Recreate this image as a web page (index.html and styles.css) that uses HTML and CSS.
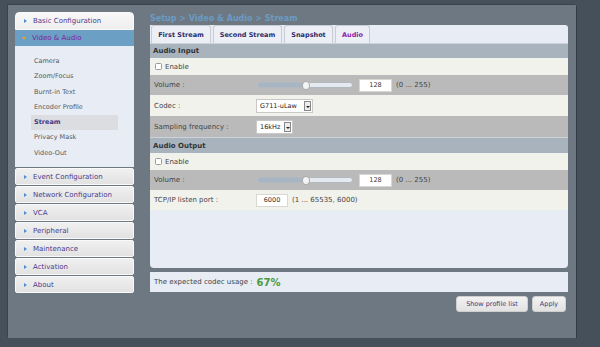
FILE: index.html
```html
<!DOCTYPE html>
<html>
<head>
<meta charset="utf-8">
<link rel="stylesheet" href="styles.css">
</head>
<body>
<div class="panel">
  <nav class="sidebar">
    <div class="menu-item first"><span class="arrow-r"></span>Basic Configuration</div>
    <div class="menu-open"><span class="arrow-d"></span>Video &amp; Audio</div>
    <ul class="submenu">
      <li>Camera</li>
      <li>Zoom/Focus</li>
      <li>Burnt-in Text</li>
      <li>Encoder Profile</li>
      <li class="current">Stream</li>
      <li>Privacy Mask</li>
      <li>Video-Out</li>
    </ul>
    <div class="menu-item"><span class="arrow-r"></span>Event Configuration</div>
    <div class="menu-item"><span class="arrow-r"></span>Network Configuration</div>
    <div class="menu-item"><span class="arrow-r"></span>VCA</div>
    <div class="menu-item"><span class="arrow-r"></span>Peripheral</div>
    <div class="menu-item"><span class="arrow-r"></span>Maintenance</div>
    <div class="menu-item"><span class="arrow-r"></span>Activation</div>
    <div class="menu-item last"><span class="arrow-r"></span>About</div>
  </nav>
  <main class="main">
    <div class="crumb">Setup &gt; Video &amp; Audio &gt; Stream</div>
    <div class="content">
      <div class="tabs">
        <div class="tab t1">First Stream</div>
        <div class="tab t2">Second Stream</div>
        <div class="tab t3">Snapshot</div>
        <div class="tab t4 active">Audio</div>
      </div>
      <div class="section">Audio Input</div>
      <div class="row light r17"><span class="check"></span>Enable</div>
      <div class="row dark r20">
        <span class="label">Volume :</span>
        <span class="slider"><span class="fill"></span><span class="knob"></span></span>
        <span class="num">128</span>
        <span class="hint">(0 ... 255)</span>
      </div>
      <div class="row light r21">
        <span class="label">Codec :</span>
        <span class="select w57">G711-uLaw<span class="sel-btn"></span></span>
      </div>
      <div class="row dark r21">
        <span class="label">Sampling frequency :</span>
        <span class="select w37">16kHz<span class="sel-btn"></span></span>
      </div>
      <div class="section s16">Audio Output</div>
      <div class="row light r17"><span class="check"></span>Enable</div>
      <div class="row dark r20">
        <span class="label">Volume :</span>
        <span class="slider"><span class="fill"></span><span class="knob"></span></span>
        <span class="num">128</span>
        <span class="hint">(0 ... 255)</span>
      </div>
      <div class="row light r20">
        <span class="label">TCP/IP listen port :</span>
        <span class="num port">6000</span>
        <span class="hint">(1 ... 65535, 6000)</span>
      </div>
    </div>
    <div class="usage">The expected codec usage : <span class="pct">67%</span></div>
    <div class="buttons">
      <button class="btn b1">Show profile list</button>
      <button class="btn b2">Apply</button>
    </div>
  </main>
</div>
</body>
</html>
```
FILE: styles.css
```css
html, body {
  margin: 0;
  padding: 0;
  background: #46505a;
  font-family: "DejaVu Sans", Verdana, sans-serif;
  font-size: 7px;
}
.panel {
  margin: 5px 0 0 8px;
  width: 568px;
  height: 333px;
  box-sizing: border-box;
  background: #6e7882;
  box-shadow: 1px 1px 0 #333b44, -1px -1px 0 #3a434c;
  padding: 7px 8px 0 7px;
  display: flex;
  gap: 16px;
}
.sidebar {
  width: 119px;
  flex: none;
}
.menu-item {
  height: 17px;
  box-sizing: border-box;
  margin-bottom: 1px;
  background: linear-gradient(#f0f0f0, #e2e2e2);
  border: 1px solid #fafafa;
  border-radius: 2px;
  color: #4b3a8c;
  font-size: 7px;
  display: flex;
  align-items: center;
  padding-left: 8px;
  white-space: nowrap;
}
.menu-item.first {
  height: 18px;
  margin-bottom: 0;
  border-radius: 4px 4px 0 0;
  background: linear-gradient(#f8f8f8, #eeeeee);
}
.arrow-r {
  width: 0;
  height: 0;
  border-left: 3px solid #4a8fd4;
  border-top: 2px solid transparent;
  border-bottom: 2px solid transparent;
  margin-right: 6px;
}
.menu-open {
  height: 16px;
  background: #6b9fc3;
  color: #7a1fa0;
  display: flex;
  align-items: center;
  padding-left: 7px;
}
.arrow-d {
  width: 0;
  height: 0;
  border-top: 3px solid #e8a42a;
  border-left: 2.5px solid transparent;
  border-right: 2.5px solid transparent;
  margin-right: 6px;
}
.submenu {
  list-style: none;
  margin: 0 0 1px 0;
  padding: 8px 16px 5px 16px;
  background: #e8ecf4;
  height: 121px;
  box-sizing: border-box;
}
.submenu li {
  height: 15.3px;
  line-height: 15.3px;
  font-size: 6.5px;
  color: #555a60;
  padding-left: 3px;
}
.submenu li.current {
  background: #dcdde0;
  font-weight: bold;
  color: #3b3b8c;
}
.main {
  width: 418px;
  flex: none;
}
.crumb {
  height: 13px;
  line-height: 13px;
  font-size: 8px;
  font-weight: bold;
  color: #6b9bc4;
  white-space: nowrap;
}
.content {
  background: #e8ecf4;
  height: 243px;
  border-radius: 0 3px 4px 4px;
}
.tabs {
  height: 18px;
  display: flex;
  gap: 2px;
  padding-left: 1px;
}
.tab {
  height: 18px;
  box-sizing: border-box;
  padding: 0;
  border: 1px solid #c9ccd2;
  border-bottom: none;
  border-radius: 3px 3px 0 0;
  background: #eceff5;
  font-weight: bold;
  font-size: 6.5px;
  color: #2c2c6a;
  display: flex;
  align-items: center;
  justify-content: center;
  white-space: nowrap;
  flex: none;
}
.t1 { width: 60px; }
.t2 { width: 69px; }
.t3 { width: 49px; }
.t4 { width: 35px; }
.tab.active { color: #8c22a8; }
.section {
  height: 15px;
  box-sizing: border-box;
  background: #a9b3bd;
  border-top: 1px solid #cdd3da;
  font-weight: bold;
  color: #333;
  padding-left: 3px;
  display: flex;
  align-items: center;
}
.section.s16 { height: 16px; }
.row {
  display: flex;
  align-items: center;
  color: #444;
  padding-left: 4px;
  white-space: nowrap;
}
.light { background: #f2f2ec; }
.dark { background: #bababa; }
.r17 { height: 17px; }
.r20 { height: 20px; }
.r21 { height: 21px; }
.check {
  width: 7px;
  height: 7px;
  box-sizing: border-box;
  border: 1px solid #999;
  border-radius: 1.5px;
  background: #fff;
  margin: 0 3px 0 1px;
}
.label {
  width: 102px;
  flex: none;
}
.slider {
  position: relative;
  width: 97px;
  height: 6px;
  border-radius: 3px;
  background: #e4eaf0;
  border: 0.5px solid #b0b8c0;
  box-sizing: border-box;
}
.fill {
  display: block;
  width: 49px;
  height: 100%;
  border-radius: 3px 0 0 3px;
  background: #a8b5c3;
}
.knob {
  position: absolute;
  left: 45px;
  top: -2px;
  width: 8px;
  height: 9px;
  border-radius: 50%;
  background: #f4f4f4;
  border: 0.5px solid #aaa;
  box-sizing: border-box;
}
.num {
  margin-left: 6px;
  width: 33px;
  height: 13px;
  box-sizing: border-box;
  background: #fff;
  border: 1px solid #d8d8d0;
  font-size: 6.5px;
  color: #333;
  display: flex;
  align-items: center;
  justify-content: center;
}
.num.port {
  margin-left: 0;
  width: 32px;
}
.hint {
  margin-left: 4px;
  color: #444;
}
.select {
  height: 14px;
  box-sizing: border-box;
  background: #fff;
  border: 1px solid #c8c8c8;
  display: flex;
  align-items: center;
  padding-left: 3px;
  color: #222;
  font-size: 6.5px;
  position: relative;
}
.w57 { width: 57px; }
.w37 { width: 37px; }
.sel-btn {
  position: absolute;
  right: 1px;
  top: 1px;
  width: 7px;
  height: 10px;
  background: #ececec;
  border: 0.5px solid #888;
  box-sizing: border-box;
}
.sel-btn::after {
  content: "";
  position: absolute;
  left: 1px;
  top: 4px;
  border-top: 2px solid #222;
  border-left: 2px solid transparent;
  border-right: 2px solid transparent;
}
.usage {
  margin-top: 4px;
  height: 20px;
  background: #e8ecf4;
  display: flex;
  align-items: center;
  padding-left: 4px;
  color: #444;
}
.pct {
  color: #4c9a3c;
  font-weight: bold;
  font-size: 10px;
  margin-left: 4px;
}
.buttons {
  margin-top: 4px;
  display: flex;
  justify-content: flex-end;
  gap: 4px;
  padding-right: 2px;
}
.btn {
  height: 16px;
  padding: 0;
  background: linear-gradient(#f2f2f2, #e2e2e2);
  border: 1px solid #cfcfcf;
  border-radius: 3px;
  font-family: "DejaVu Sans", Verdana, sans-serif;
  font-size: 6.5px;
  color: #3b3b7a;
  white-space: nowrap;
}
.b1 { width: 72px; }
.b2 { width: 34px; }
```
